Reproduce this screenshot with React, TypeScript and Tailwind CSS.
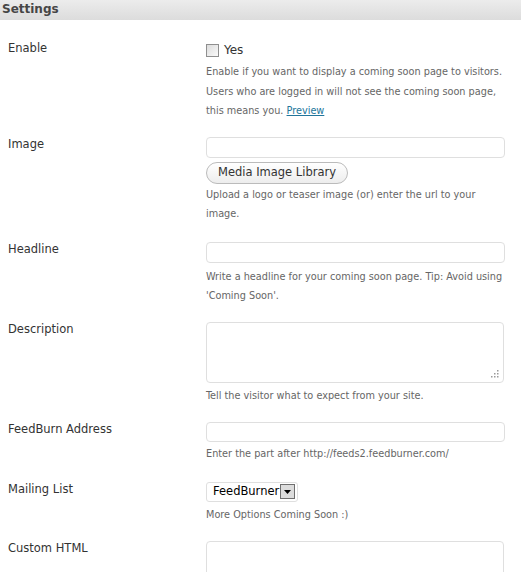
const font = { fontFamily: '"DejaVu Sans", Verdana, sans-serif' };
const condensed = { fontFamily: '"DejaVu Sans Condensed", "DejaVu Sans", Verdana, sans-serif' };

const Label = ({ children }: { children: React.ReactNode }) => (
  <div className="w-[206px] shrink-0 pl-2 text-[11.5px] leading-[14px] text-[#333]">{children}</div>
);

const Desc = ({ children, className = "" }: { children: React.ReactNode; className?: string }) => (
  <p className={`text-[10.8px] leading-[19.5px] text-[#666] ${className}`} style={condensed}>
    {children}
  </p>
);

const TextInput = ({ h = "h-[21px]" }: { h?: string }) => (
  <div className={`w-[299px] ${h} rounded-[4px] border border-[#dfdfdf] bg-white`} />
);

const Grip = () => (
  <svg width="10" height="10" viewBox="0 0 10 10" className="absolute bottom-[4px] right-[4px]">
    {[
      [8, 2],
      [8, 5],
      [5, 5],
      [8, 8],
      [5, 8],
      [2, 8],
    ].map(([x, y]) => (
      <rect key={`${x}-${y}`} x={x} y={y} width="1.5" height="1.5" fill="#9a9a9a" />
    ))}
  </svg>
);

export default function App() {
  return (
    <div className="h-[572px] w-[521px] overflow-hidden bg-white" style={font}>
      {/* Section header */}
      <div className="h-[20px] bg-gradient-to-b from-[#ececec] to-[#dcdcdc] pl-[2px] text-[12px] font-bold leading-[19px] text-[#464646]">
        Settings
      </div>

      {/* Enable */}
      <div className="mt-[21px] flex">
        <Label>Enable</Label>
        <div>
          <label className="flex h-[18px] items-center gap-[5px] text-[12px] text-[#333]">
            <span className="h-[13px] w-[13px] border border-[#8f8f8f] bg-gradient-to-br from-[#dcdcdc] to-[#fafafa]" />
            Yes
          </label>
          <Desc className="mt-[3px] w-[301px]">
            Enable if you want to display a coming soon page to visitors. Users who are logged in will not see the
            coming soon page, this means you.{" "}
            <a href="#" className="text-[#21759b] underline">
              Preview
            </a>
          </Desc>
        </div>
      </div>

      {/* Image */}
      <div className="mt-[16px] flex">
        <Label>Image</Label>
        <div>
          <TextInput />
          <button className="mt-[4px] h-[22px] w-[142px] rounded-full border border-[#bbb] bg-gradient-to-b from-white to-[#ededed] text-[11.5px] text-[#333]">
            Media Image Library
          </button>
          <Desc className="mt-[1px] w-[299px]">Upload a logo or teaser image (or) enter the url to your image.</Desc>
        </div>
      </div>

      {/* Headline */}
      <div className="mt-[18px] flex">
        <Label>Headline</Label>
        <div>
          <TextInput />
          <Desc className="mt-[4px] w-[301px]">
            Write a headline for your coming soon page. Tip: Avoid using 'Coming Soon'.
          </Desc>
        </div>
      </div>

      {/* Description */}
      <div className="mt-[16px] flex">
        <Label>Description</Label>
        <div>
          <div className="relative h-[61px] w-[298px] rounded-[4px] border border-[#dfdfdf] bg-white">
            <Grip />
          </div>
          <Desc className="mt-[3px]">Tell the visitor what to expect from your site.</Desc>
        </div>
      </div>

      {/* FeedBurn Address */}
      <div className="mt-[17px] flex">
        <Label>FeedBurn Address</Label>
        <div>
          <TextInput h="h-[20px]" />
          <Desc className="mt-[2px]">Enter the part after http://feeds2.feedburner.com/</Desc>
        </div>
      </div>

      {/* Mailing List */}
      <div className="mt-[18px] flex">
        <Label>Mailing List</Label>
        <div>
          <div className="flex h-[20px] w-[92px] items-center rounded-[3px] border border-[#dfdfdf] bg-white pl-[6px]">
            <span className="text-[11.5px] text-black">FeedBurner</span>
            <span className="ml-auto mr-[2px] flex h-[15px] w-[15px] items-center justify-center border border-[#6f6f6f] bg-[#dcdcdc]">
              <svg width="7" height="4" viewBox="0 0 7 4">
                <path d="M0 0h7L3.5 4z" fill="#000" />
              </svg>
            </span>
          </div>
          <Desc className="mt-[3px]">More Options Coming Soon :)</Desc>
        </div>
      </div>

      {/* Custom HTML */}
      <div className="mt-[17px] flex">
        <Label>Custom HTML</Label>
        <div className="h-[80px] w-[298px] rounded-[4px] border border-[#dfdfdf] bg-white" />
      </div>
    </div>
  );
}
